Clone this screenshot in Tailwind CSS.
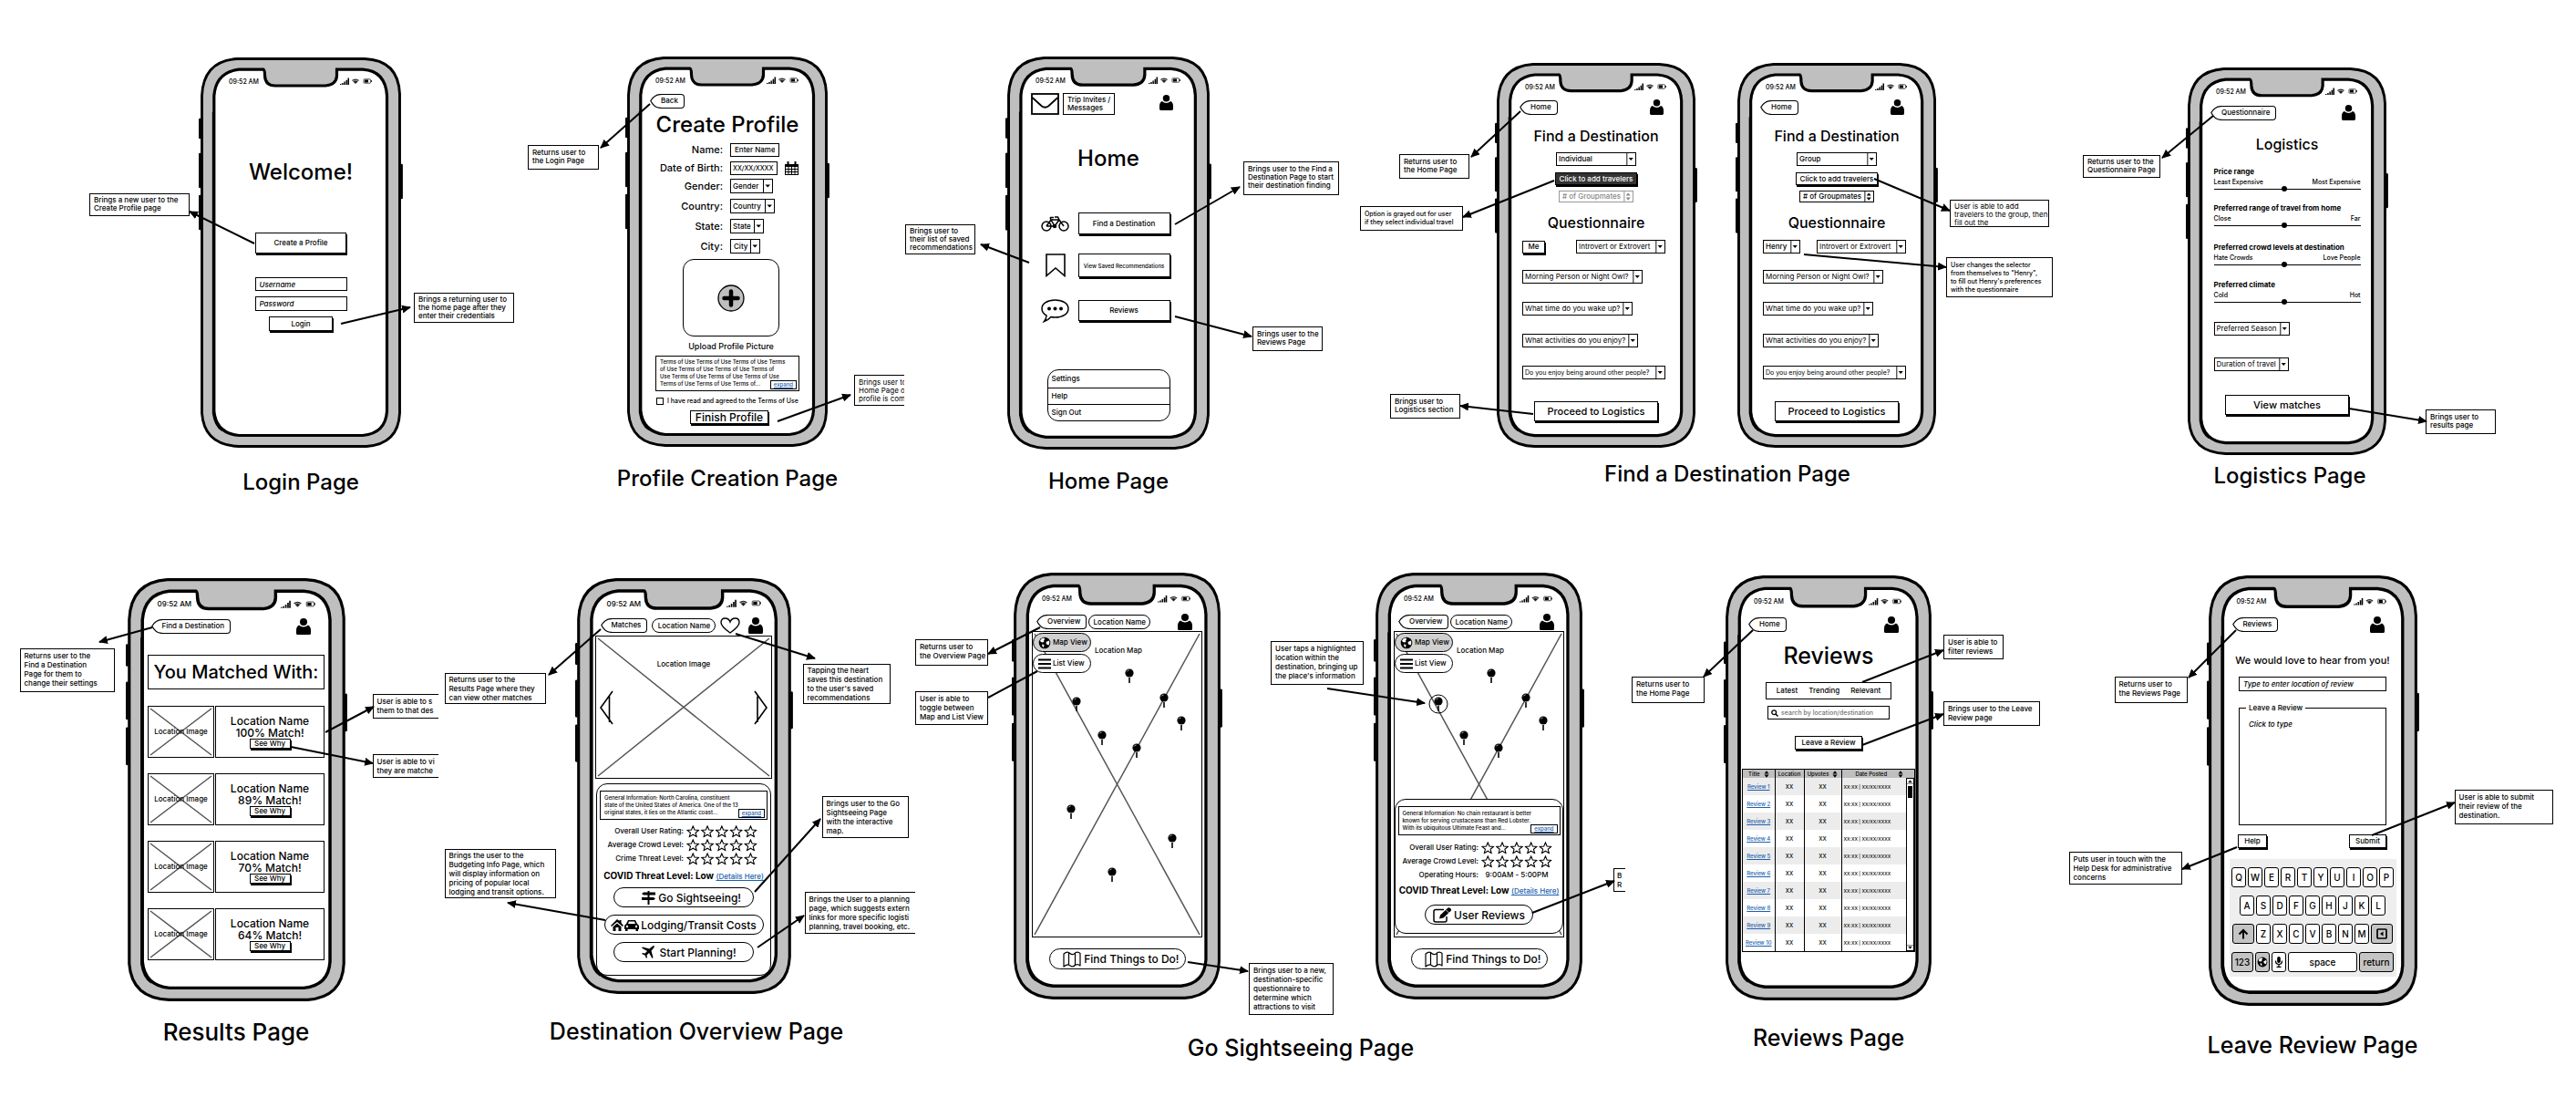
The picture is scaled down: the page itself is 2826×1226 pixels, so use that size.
<!DOCTYPE html>
<html lang="en">
<head>
<meta charset="utf-8">
<title>Travel app wireframes</title>
<script src="https://cdn.jsdelivr.net/npm/@tailwindcss/browser@4"></script>
</head>
<body class="overflow-x-hidden bg-white font-['Inter','Liberation_Sans',sans-serif] text-[8px]/[9px] font-medium text-black">

<!-- Shared drawings -->
<svg class="absolute size-0" aria-hidden="true">
  <defs>
    <marker id="tip" viewBox="0 0 10 9" refX="9" refY="4.5" markerWidth="10" markerHeight="9" markerUnits="userSpaceOnUse" orient="auto"><path d="M0 0 10 4.500 0 9Z"/></marker>
    <symbol id="frame" viewBox="-2 0 224 428" preserveAspectRatio="none">
      <path d="M-.7 68v20M-.7 106v36M-.7 152v36M220.600 118v36" stroke="#000" stroke-width="2.600" stroke-linecap="round"/>
      <path d="M40 1.500H180Q217 3 218.500 40V390Q217 424 182 426.500H42Q4 425 1.500 390V42Q3 4 40 1.500Z" fill="#bfbfbf" stroke="#000" stroke-width="2.900"/>
      <path d="M42 13.200H69Q70.500 14 70.500 20Q71 31 82 31H137Q149 30 149.500 20V13.200H178Q203 15 204.500 42V388Q203 412 178 414.500H42Q17 412 14.800 388V42Q17 16 42 13.200Z" fill="#fff" stroke="#000" stroke-width="3.200"/>
      <path d="M14 60V390Q16 404 24 409" fill="none" stroke="#000" stroke-width="2.400"/>
    </symbol>
    <symbol id="status" viewBox="0 0 35 9">
      <path d="M0 7h1.500v1H0zM2.200 6h1.500v2H2.200zM4.400 4.500h1.500V8H4.400zM6.600 2.700h1.500V8H6.600zM8.500.5H10V8H8.500z"/>
      <path d="M13 3Q17 0 21 3L17 7Z" fill="#222"/><path d="M14 4Q17 2 20 4" stroke="#fff" stroke-width=".6" fill="none"/>
      <rect x="26" y="1.800" width="7.600" height="4.400" rx=".8" fill="none" stroke="#000" stroke-width=".7"/><path d="M27 2.600h4v2.800h-4zM34 3h.8v2H34z"/>
    </symbol>
    <symbol id="person" viewBox="0 0 16 18"><circle cx="8" cy="4" r="4"/><path d="M3 7.500Q5.500 9.500 8 9.500T13 7.500Q16 9 16 13V16.500Q16 18 14.500 18H1.500Q0 18 0 16.500V13Q0 9 3 7.500Z"/></symbol>
    <symbol id="tagcap" viewBox="0 0 12 16"><path d="M12 .6H11C6 .8 3 4 .8 7.500C3 12 6 15.200 11 15.400H12" fill="#fff" stroke="#000" stroke-width="1.200"/></symbol>
    <symbol id="caret" viewBox="0 0 10 14"><path d="M.5 0V14" stroke="#000"/><path d="M2.500 5.500h5.500L5.200 8.600Z"/></symbol>
    <symbol id="spin" viewBox="0 0 10 12"><path d="M.5 0V12" stroke="currentColor"/><path d="M2.500 5h5.500L5.200 1.500ZM2.500 7h5.500L5.200 10.500Z" fill="currentColor"/></symbol>
    <symbol id="star" viewBox="0 0 16 15"><path d="M8 1 9.900 5.600 15 6 11.100 9.200 12.400 14 8 11.300 3.600 14 4.900 9.200 1 6 6.100 5.600Z" fill="none" stroke="#000" stroke-width="1.200"/></symbol>
    <symbol id="stars" viewBox="0 0 78 15"><use href="#star" x="0" y="1" width="14.500" height="13.500"/><use href="#star" x="15.800" y="1" width="14.500" height="13.500"/><use href="#star" x="31.600" y="1" width="14.500" height="13.500"/><use href="#star" x="47.400" y="1" width="14.500" height="13.500"/><use href="#star" x="63.200" y="1" width="14.500" height="13.500"/></symbol>
    <symbol id="pin" viewBox="-5 -5 10 17"><path d="M-.8 5h1.600v6h-1.600z"/><circle r="4.600"/><path d="M-3-1.500Q-2-3-.5-3" fill="none" stroke="#fff" stroke-width=".7"/></symbol>
    <symbol id="globe" viewBox="0 0 14 14"><circle cx="7" cy="7" r="6.300" fill="#000"/><path d="M6 1.500Q3 2 2 4.500L3 6 5 6.500 6.500 5.500 6 4 7.500 3ZM8.500 6 12 4.500Q13 7 11.500 9.500L9 8.500ZM4 8.500 6.500 9 6 12Q4 11 4 8.500Z" fill="#fff"/></symbol>
    <symbol id="foldmap" viewBox="0 0 20 18"><path d="M1 3Q4 .5 6.500 1.500Q9 4 11.500 3.500Q13 3 14 1.500Q17 .5 19 2.500V16Q17 14 14 15Q12 17 10 17Q8 16 6.500 15Q4 14.500 1 17ZM6.500 1.500V15M13.500 2V15.500" fill="#fff" stroke="#000" stroke-width="1.200" stroke-linejoin="round"/></symbol>
    <symbol id="sort" viewBox="0 0 6 8"><path d="M.5 3.400h5L3 .3ZM.5 4.600h5L3 7.700Z"/></symbol>
  </defs>
</svg>

<main>
  <div class="grid grid-cols-[660fr_276fr_560fr_774fr_478fr_78fr] items-start pt-[62px]">

    <!-- Login -->
    <section class="flex flex-col items-center pt-px">
      <div class="relative isolate flex h-[428px] w-[220px] flex-col items-center px-4 pt-[15px]">
        <svg class="absolute -left-[2px] top-0 -z-10 h-full w-[calc(100%+4px)]"><use href="#frame"/></svg>
        <div class="flex h-[22px] w-full items-center justify-between pl-[15px] pr-4 text-[7px]"><span>09:52 AM</span><svg class="h-[9px] w-[35px]"><use href="#status"/></svg></div>
        <h1 class="mt-[74px] text-[24px]/[30px]">Welcome!</h1>
        <button class="mt-[51px] h-[23px] w-[100px] border border-black bg-white shadow-[1px_2px_0_#000]">Create a Profile</button>
        <input aria-label="Username" placeholder="Username" class="mt-[26px] h-[15px] w-[101px] border border-black px-1 italic placeholder:text-black">
        <input aria-label="Password" placeholder="Password" type="password" class="mt-[6px] h-[16px] w-[101px] border border-black px-1 italic placeholder:text-black">
        <button class="mt-[6px] h-[16px] w-[70px] border border-black bg-white shadow-[1px_2px_0_#000]">Login</button>
        <p class="absolute -left-[122px] top-[149px] h-[25px] w-[110px] whitespace-nowrap border border-black bg-white px-1 pt-[2px]">Brings a new user to the<br>Create Profile page</p>
        <p class="absolute left-[234px] top-[258px] h-[33px] w-[110px] whitespace-nowrap border border-black bg-white px-1 pt-[2px]">Brings a returning user to<br>the home page after they<br>enter their credentials</p>
        <svg class="pointer-events-none absolute left-0 top-0 size-px overflow-visible stroke-black stroke-2"><path d="M59 204-12 169" marker-end="url(#tip)"/><path d="M154 292 230 274" marker-end="url(#tip)"/></svg>
      </div>
      <h2 class="mt-[23px] text-[24px]/[30px]">Login Page</h2>
    </section>

    <!-- Profile creation -->
    <section class="flex flex-col items-center">
      <div class="relative isolate flex h-[428px] w-[220px] flex-col items-center px-4 pt-[15px]">
        <svg class="absolute -left-[2px] top-0 -z-10 h-full w-[calc(100%+4px)]"><use href="#frame"/></svg>
        <div class="flex h-[22px] w-full items-center justify-between pl-[15px] pr-4 text-[7px]"><span>09:52 AM</span><svg class="h-[9px] w-[35px]"><use href="#status"/></svg></div>
        <button class="ml-[9px] mt-1 flex h-4 self-start"><svg class="h-4 w-3"><use href="#tagcap"/></svg><span class="flex h-4 items-center rounded-r-[4px] border border-l-0 border-black pb-px pr-[6px]">Back</span></button>
        <h1 class="mt-[3px] text-[24px]/[30px]">Create Profile</h1>
        <div class="mt-[2px] flex w-full flex-col text-[11px]/[14px]">
          <div class="flex h-5 items-center gap-2"><label for="name" class="w-[89px] text-right">Name:</label><input id="name" value="Enter Name" class="h-[15px] w-[54px] border border-black px-1 text-[8px]"></div>
          <div class="flex h-5 items-center gap-2"><label for="dob" class="w-[89px] whitespace-nowrap text-right">Date of Birth:</label><input id="dob" value="XX/XX/XXXX" class="h-[15px] w-[52px] border border-black px-[2px] text-[7px]">
            <svg class="h-[15px] w-[15px]" viewBox="0 0 15 15"><path d="M0 3h15v12H0z"/><path d="M3.500 0v4M11.500 0v4" stroke="#000" stroke-width="2"/><path d="M1 6h2.500v2H1zM4.500 6H7v2H4.500zM8 6h2.500v2H8zM11.500 6H14v2h-2.500zM1 9h2.500v2H1zM4.500 9H7v2H4.500zM8 9h2.500v2H8zM11.500 9H14v2h-2.500zM1 12h2.500v2H1zM4.500 12H7v2H4.500zM8 12h2.500v2H8zM11.500 12H14v2h-2.500z" fill="#fff"/></svg></div>
          <div class="flex h-5 items-center gap-2"><label for="gender" class="w-[89px] text-right">Gender:</label><span class="flex h-4 w-[47px] border border-black"><select id="gender" class="min-w-0 flex-1 appearance-none pl-[2px] text-[8px]"><option>Gender</option></select><svg class="h-[14px] w-[10px]"><use href="#caret"/></svg></span></div>
          <div class="mt-px flex h-[22px] items-center gap-2"><label for="country" class="w-[89px] text-right">Country:</label><span class="flex h-4 w-[49px] border border-black"><select id="country" class="min-w-0 flex-1 appearance-none pl-[2px] text-[8px]"><option>Country</option></select><svg class="h-[14px] w-[10px]"><use href="#caret"/></svg></span></div>
          <div class="flex h-[22px] items-center gap-2"><label for="state" class="w-[89px] text-right">State:</label><span class="flex h-4 w-[37px] border border-black"><select id="state" class="min-w-0 flex-1 appearance-none pl-[2px] text-[8px]"><option>State</option></select><svg class="h-[14px] w-[10px]"><use href="#caret"/></svg></span></div>
          <div class="flex h-[22px] items-center gap-2"><label for="city" class="w-[89px] text-right">City:</label><span class="flex h-4 w-[33px] border border-black"><select id="city" class="min-w-0 flex-1 appearance-none pl-[3px] text-[8px]"><option>City</option></select><svg class="h-[14px] w-[10px]"><use href="#caret"/></svg></span></div>
        </div>
        <button aria-label="Add picture" class="ml-2 mt-[3px] flex h-[85px] w-[106px] items-center justify-center rounded-[12px] border border-black">
          <svg class="size-[30px]" viewBox="0 0 30 30"><circle cx="15" cy="15" r="14" fill="#bfbfbf" stroke="#000" stroke-width="1.300"/><path d="M7.500 15h15M15 7.500v15" stroke="#000" stroke-width="4.500" stroke-linecap="round"/></svg>
        </button>
        <p class="ml-2 mt-[5px] text-[9px]/[11px]">Upload Profile Picture</p>
        <div class="mt-[5px] h-[39px] w-[158px] whitespace-nowrap border border-black pl-1 pt-[2px] text-[6px]/[8px]">Terms of Use Terms of Use Terms of Use Terms<br>of Use Terms of Use Terms of Use Terms of<br>Use Terms of Use Terms of Use Terms of Use<br><span class="flex justify-between pr-[2px]">Terms of Use Terms of Use Terms of... <a href="#" class="border border-black px-[3px] text-[#1c5fae] underline">expand</a></span></div>
        <label class="mt-[5px] flex items-center gap-1 whitespace-nowrap text-[7px]/[11px]"><input type="checkbox" class="size-2 appearance-none border border-black">I have read and agreed to the Terms of Use</label>
        <button class="ml-1 mt-[5px] h-[15px] w-[86px] border border-black bg-white text-[12px]/[13px] shadow-[1px_2px_0_#000]">Finish Profile</button>
        <p class="absolute -left-[109px] top-[97px] h-[27px] w-[78px] whitespace-nowrap border border-black bg-white px-1 pt-[3px]">Returns user to<br>the Login Page</p>
        <p class="absolute left-[249px] top-[349px] h-[34px] w-[55px] overflow-hidden whitespace-nowrap border border-r-0 border-black bg-white pl-1 pt-[3px] font-normal">Brings user to<br>Home Page o<br>profile is com</p>
        <svg class="pointer-events-none absolute left-0 top-0 size-px overflow-visible stroke-black stroke-2"><path d="M25 52-29 100" marker-end="url(#tip)"/><path d="M165 400 245 371" marker-end="url(#tip)"/></svg>
      </div>
      <h2 class="mt-5 whitespace-nowrap text-[24px]/[30px]">Profile Creation Page</h2>
    </section>

    <!-- Home -->
    <section class="flex flex-col items-center">
      <div class="relative isolate flex h-[431px] w-[222px] flex-col items-center px-4 pt-[15px]">
        <svg class="absolute -left-[2px] top-0 -z-10 h-full w-[calc(100%+4px)]"><use href="#frame"/></svg>
        <div class="flex h-[22px] w-full items-center justify-between pl-[15px] pr-4 text-[7px]"><span>09:52 AM</span><svg class="h-[9px] w-[35px]"><use href="#status"/></svg></div>
        <div class="mt-[3px] flex w-full items-start gap-1 pl-[10px] pr-6">
          <svg class="h-6 w-[31px]" viewBox="0 0 31 24"><rect x="1" y="1" width="29" height="22" fill="none" stroke="#000" stroke-width="1.800"/><path d="M1.500 5 12 14.500Q15.500 17 19 14.500L29.500 5" fill="none" stroke="#000" stroke-width="1.800"/></svg>
          <p class="h-6 w-[57px] whitespace-nowrap border border-black pl-1 pt-[2px]">Trip Invites /<br>Messages</p>
          <svg class="ml-auto mt-[2px] h-[17px] w-[15px]"><use href="#person"/></svg>
        </div>
        <h1 class="mt-[33px] text-[24px]/[30px]">Home</h1>
        <div class="mt-11 grid grid-cols-[31px_102px] items-center justify-items-center gap-x-[9px] self-start pl-[21px]">
          <svg class="h-[17px] w-[31px]" viewBox="0 0 31 17" fill="none" stroke="#000" stroke-width="1.500"><circle cx="6" cy="11" r="5"/><circle cx="25" cy="11" r="5"/><path d="M6 11 11 4H20L25 11M11 4 15 11H6M15 11 20 4 18.500 1H15M10 1.500h4M11 4 10 1.500"/><circle cx="15" cy="11" r="1.500" fill="#000"/></svg>
          <button class="h-6 w-[101px] border border-black bg-white shadow-[1px_2px_0_#000]">Find a Destination</button>
          <svg class="mt-5 h-[26px] w-[22px]" viewBox="0 0 22 26"><path d="M1 1H21V24.500L11 16 1 24.500Z" fill="none" stroke="#000" stroke-width="1.600"/></svg>
          <button class="mt-[21px] h-[26px] w-[101px] whitespace-nowrap border border-black bg-white text-[6px] shadow-[1px_2px_0_#000]">View Saved Recommendations</button>
          <svg class="mt-6 h-[26px] w-[31px]" viewBox="0 0 31 26"><path d="M15.500 1C24 1 30 5 30 10.500S24 20 15.500 20Q13 20 11 19.500 8 23 3.500 24.500 6 21.500 6 18 1 15 1 10.500C1 5 7 1 15.500 1Z" fill="none" stroke="#000" stroke-width="1.500"/><circle cx="9" cy="10.500" r="2"/><circle cx="15.500" cy="10.500" r="2"/><circle cx="22" cy="10.500" r="2"/></svg>
          <button class="mt-[22px] h-[23px] w-[101px] border border-black bg-white shadow-[1px_2px_0_#000]">Reviews</button>
        </div>
        <nav class="mt-[51px] flex h-[57px] w-[135px] flex-col divide-y divide-black rounded-[12px] border border-black">
          <a href="#" class="flex h-5 items-center pl-1">Settings</a><a href="#" class="flex h-[18px] items-center pl-1">Help</a><a href="#" class="flex h-[17px] items-center pl-1">Sign Out</a>
        </nav>
        <p class="absolute -left-[112px] top-[184px] h-[33px] w-[77px] whitespace-nowrap border border-black bg-white px-1 pt-[2px]">Brings user to<br>their list of saved<br>recommendations</p>
        <p class="absolute left-[259px] top-[115px] h-[37px] w-[105px] whitespace-nowrap border border-black bg-white px-1 pt-[3px]">Brings user to the Find a<br>Destination Page to start<br>their destination finding</p>
        <p class="absolute left-[269px] top-[296px] h-[27px] w-[77px] whitespace-nowrap border border-black bg-white px-1 pt-[3px]">Brings user to the<br>Reviews Page</p>
        <svg class="pointer-events-none absolute left-0 top-0 size-px overflow-visible stroke-black stroke-2"><path d="M24 226-29 206" marker-end="url(#tip)"/><path d="M184 184 255 143" marker-end="url(#tip)"/><path d="M184 285 268 307" marker-end="url(#tip)"/></svg>
      </div>
      <h2 class="mt-5 text-[24px]/[30px]">Home Page</h2>
    </section>

    <!-- Find a destination -->
    <section class="flex flex-col items-center pt-[7px]">
      <div class="flex gap-[46px]">
        <div class="relative isolate flex h-[422px] w-[218px] flex-col items-center px-4 pt-[15px]">
          <svg class="absolute -left-[2px] top-0 -z-10 h-full w-[calc(100%+4px)]"><use href="#frame"/></svg>
          <div class="flex h-[22px] w-full items-center justify-between pl-[15px] pr-4 text-[7px]"><span>09:52 AM</span><svg class="h-[9px] w-[35px]"><use href="#status"/></svg></div>
          <div class="mt-[3px] flex w-full items-center justify-between pl-[9px] pr-[19px]">
            <button class="flex h-4"><svg class="h-4 w-3"><use href="#tagcap"/></svg><span class="flex h-4 items-center rounded-r-[4px] border border-l-0 border-black pb-px pr-[6px]">Home</span></button>
            <svg class="h-[17px] w-[15px]"><use href="#person"/></svg>
          </div>
          <h1 class="mt-[13px] text-[16px]/[20px]">Find a Destination</h1>
          <span class="mt-2 flex h-[15px] w-[88px] border border-black"><select aria-label="Travel party" class="min-w-0 flex-1 appearance-none pl-[2px]"><option>Individual</option></select><svg class="h-[13px] w-[10px]"><use href="#caret"/></svg></span>
          <button class="mt-[7px] h-[14px] w-[90px] whitespace-nowrap border border-black bg-[#333] text-white shadow-[1px_2px_0_#000]" disabled>Click to add travelers</button>
          <span class="mt-[6px] flex h-[13px] w-[82px] items-center justify-between border border-[#999] pl-[3px] text-[#888]"><span class="whitespace-nowrap">&#35; of Groupmates</span><svg class="h-[11px] w-[10px]"><use href="#spin"/></svg></span>
          <h2 class="mt-3 text-[16px]/[20px]">Questionnaire</h2>
          <div class="mt-[9px] flex w-full items-center justify-between pl-3 pr-[17px]">
            <button class="h-[14px] w-[25px] border border-black bg-white shadow-[1px_2px_0_#000]">Me</button>
            <span class="flex h-[15px] w-[98px] border border-black"><select aria-label="Personality" class="min-w-0 flex-1 appearance-none pl-[2px] font-normal"><option>Introvert or Extrovert</option></select><svg class="h-[13px] w-[10px]"><use href="#caret"/></svg></span>
          </div>
          <div class="ml-3 mt-[18px] flex flex-col gap-[20px] self-start font-normal">
            <span class="flex h-[15px] w-[132px] border border-black"><select aria-label="Morning or night" class="min-w-0 flex-1 appearance-none pl-[2px]"><option>Morning Person or Night Owl?</option></select><svg class="h-[13px] w-[10px]"><use href="#caret"/></svg></span>
            <span class="flex h-[15px] w-[121px] border border-black"><select aria-label="Wake time" class="min-w-0 flex-1 appearance-none pl-[2px]"><option>What time do you wake up?</option></select><svg class="h-[13px] w-[10px]"><use href="#caret"/></svg></span>
            <span class="flex h-[15px] w-[127px] border border-black"><select aria-label="Activities" class="min-w-0 flex-1 appearance-none pl-[2px]"><option>What activities do you enjoy?</option></select><svg class="h-[13px] w-[10px]"><use href="#caret"/></svg></span>
            <span class="flex h-[15px] w-[157px] border border-black"><select aria-label="Company" class="min-w-0 flex-1 appearance-none pl-[2px] text-[7px]"><option>Do you enjoy being around other people?</option></select><svg class="h-[13px] w-[10px]"><use href="#caret"/></svg></span>
          </div>
          <button class="mt-6 h-[22px] w-[136px] whitespace-nowrap border border-black bg-white text-[11px] shadow-[1px_2px_0_#000]">Proceed to Logistics</button>
          <p class="absolute -left-[107px] top-[100px] h-[27px] w-[77px] whitespace-nowrap border border-black bg-white px-1 pt-[3px]">Returns user to<br>the Home Page</p>
          <p class="absolute -left-[150px] top-[157px] h-[27px] w-[113px] whitespace-nowrap border border-black bg-white px-1 pt-[3px] text-[7px]/[9px]">Option is grayed out for user<br>if they select individual travel</p>
          <p class="absolute -left-[117px] top-[363px] h-[27px] w-[77px] whitespace-nowrap border border-black bg-white px-1 pt-[3px]">Brings user to<br>Logistics section</p>
          <svg class="pointer-events-none absolute left-0 top-0 size-px overflow-visible stroke-black stroke-2"><path d="M26 53-28 103" marker-end="url(#tip)"/><path d="M63 129-37 169" marker-end="url(#tip)"/><path d="M40 385-40 376" marker-end="url(#tip)"/></svg>
        </div>
        <div class="relative isolate flex h-[422px] w-[218px] flex-col items-center px-4 pt-[15px]">
          <svg class="absolute -left-[2px] top-0 -z-10 h-full w-[calc(100%+4px)]"><use href="#frame"/></svg>
          <div class="flex h-[22px] w-full items-center justify-between pl-[15px] pr-4 text-[7px]"><span>09:52 AM</span><svg class="h-[9px] w-[35px]"><use href="#status"/></svg></div>
          <div class="mt-[3px] flex w-full items-center justify-between pl-[9px] pr-[19px]">
            <button class="flex h-4"><svg class="h-4 w-3"><use href="#tagcap"/></svg><span class="flex h-4 items-center rounded-r-[4px] border border-l-0 border-black pb-px pr-[6px]">Home</span></button>
            <svg class="h-[17px] w-[15px]"><use href="#person"/></svg>
          </div>
          <h1 class="mt-[13px] text-[16px]/[20px]">Find a Destination</h1>
          <span class="mt-2 flex h-[15px] w-[88px] border border-black"><select aria-label="Travel party" class="min-w-0 flex-1 appearance-none pl-[2px]"><option>Group</option></select><svg class="h-[13px] w-[10px]"><use href="#caret"/></svg></span>
          <button class="mt-[7px] h-[14px] w-[90px] whitespace-nowrap border border-black bg-white shadow-[1px_2px_0_#000]">Click to add travelers</button>
          <span class="mt-[6px] flex h-[13px] w-[82px] items-center justify-between border border-black pl-[3px]"><span class="whitespace-nowrap">&#35; of Groupmates</span><svg class="h-[11px] w-[10px]"><use href="#spin"/></svg></span>
          <h2 class="mt-3 text-[16px]/[20px]">Questionnaire</h2>
          <div class="mt-[9px] flex w-full items-center justify-between pl-3 pr-[17px]">
            <span class="flex h-[15px] w-[41px] border border-black"><select aria-label="Traveler" class="min-w-0 flex-1 appearance-none pl-[2px]"><option>Henry</option></select><svg class="h-[13px] w-[10px]"><use href="#caret"/></svg></span>
            <span class="flex h-[15px] w-[98px] border border-black"><select aria-label="Personality" class="min-w-0 flex-1 appearance-none pl-[2px] font-normal"><option>Introvert or Extrovert</option></select><svg class="h-[13px] w-[10px]"><use href="#caret"/></svg></span>
          </div>
          <div class="ml-3 mt-[18px] flex flex-col gap-[20px] self-start font-normal">
            <span class="flex h-[15px] w-[132px] border border-black"><select aria-label="Morning or night" class="min-w-0 flex-1 appearance-none pl-[2px]"><option>Morning Person or Night Owl?</option></select><svg class="h-[13px] w-[10px]"><use href="#caret"/></svg></span>
            <span class="flex h-[15px] w-[121px] border border-black"><select aria-label="Wake time" class="min-w-0 flex-1 appearance-none pl-[2px]"><option>What time do you wake up?</option></select><svg class="h-[13px] w-[10px]"><use href="#caret"/></svg></span>
            <span class="flex h-[15px] w-[127px] border border-black"><select aria-label="Activities" class="min-w-0 flex-1 appearance-none pl-[2px]"><option>What activities do you enjoy?</option></select><svg class="h-[13px] w-[10px]"><use href="#caret"/></svg></span>
            <span class="flex h-[15px] w-[157px] border border-black"><select aria-label="Company" class="min-w-0 flex-1 appearance-none pl-[2px] text-[7px]"><option>Do you enjoy being around other people?</option></select><svg class="h-[13px] w-[10px]"><use href="#caret"/></svg></span>
          </div>
          <button class="mt-6 h-[22px] w-[136px] whitespace-nowrap border border-black bg-white text-[11px] shadow-[1px_2px_0_#000]">Proceed to Logistics</button>
          <p class="absolute left-[233px] top-[150px] h-[30px] w-[109px] whitespace-nowrap border border-black bg-white px-1 pt-[2px] font-normal">User is able to add<br>travelers to the group, then<br>fill out the</p>
          <p class="absolute left-[229px] top-[213px] h-11 w-[117px] whitespace-nowrap border border-black bg-white px-1 pt-[3px] text-[7px]/[9px]">User changes the selector<br>from themselves to "Henry",<br>to fill out Henry's preferences<br>with the questionnaire</p>
          <svg class="pointer-events-none absolute left-0 top-0 size-px overflow-visible stroke-black stroke-2"><path d="M150 127 233 162" marker-end="url(#tip)"/><path d="M73 210 229 224" marker-end="url(#tip)"/></svg>
        </div>
      </div>
      <h2 class="mt-[14px] pl-6 text-[24px]/[30px]">Find a Destination Page</h2>
    </section>

    <!-- Logistics -->
    <section class="flex flex-col items-center pt-3">
      <div class="relative isolate flex h-[425px] w-[218px] flex-col items-center px-4 pt-[15px]">
        <svg class="absolute -left-[2px] top-0 -z-10 h-full w-[calc(100%+4px)]"><use href="#frame"/></svg>
        <div class="flex h-[22px] w-full items-center justify-between pl-[15px] pr-4 text-[7px]"><span>09:52 AM</span><svg class="h-[9px] w-[35px]"><use href="#status"/></svg></div>
        <div class="mt-1 flex w-full items-center justify-between pl-[9px] pr-[18px]">
          <button class="flex h-4"><svg class="h-4 w-3"><use href="#tagcap"/></svg><span class="flex h-4 items-center rounded-r-[4px] border border-l-0 border-black pb-px pr-[6px]">Questionnaire</span></button>
          <svg class="h-[17px] w-[15px]"><use href="#person"/></svg>
        </div>
        <h1 class="mt-4 text-[16px]/[20px]">Logistics</h1>
        <div class="mt-4 w-[161px]">
          <label for="price" class="block font-bold">Price range</label>
          <div class="mt-[2px] flex justify-between text-[7px]"><span>Least Expensive</span><span>Most Expensive</span></div>
          <input id="price" type="range" value="48" class="block h-[6px] w-full appearance-none bg-[linear-gradient(#000,#000)] bg-[length:100%_1px] bg-center bg-no-repeat [&::-webkit-slider-thumb]:size-[6px] [&::-webkit-slider-thumb]:appearance-none [&::-webkit-slider-thumb]:rounded-full [&::-webkit-slider-thumb]:bg-black">
          <label for="range" class="mt-[14px] block font-bold">Preferred range of travel from home</label>
          <div class="mt-[2px] flex justify-between text-[7px]"><span>Close</span><span>Far</span></div>
          <input id="range" type="range" value="48" class="block h-[6px] w-full appearance-none bg-[linear-gradient(#000,#000)] bg-[length:100%_1px] bg-center bg-no-repeat [&::-webkit-slider-thumb]:size-[6px] [&::-webkit-slider-thumb]:appearance-none [&::-webkit-slider-thumb]:rounded-full [&::-webkit-slider-thumb]:bg-black">
          <label for="crowd" class="mt-[17px] block font-bold">Preferred crowd levels at destination</label>
          <div class="mt-[2px] flex justify-between text-[7px]"><span>Hate Crowds</span><span>Love People</span></div>
          <input id="crowd" type="range" value="48" class="block h-[6px] w-full appearance-none bg-[linear-gradient(#000,#000)] bg-[length:100%_1px] bg-center bg-no-repeat [&::-webkit-slider-thumb]:size-[6px] [&::-webkit-slider-thumb]:appearance-none [&::-webkit-slider-thumb]:rounded-full [&::-webkit-slider-thumb]:bg-black">
          <label for="climate" class="mt-[15px] block font-bold">Preferred climate</label>
          <div class="mt-[2px] flex justify-between text-[7px]"><span>Cold</span><span>Hot</span></div>
          <input id="climate" type="range" value="48" class="block h-[6px] w-full appearance-none bg-[linear-gradient(#000,#000)] bg-[length:100%_1px] bg-center bg-no-repeat [&::-webkit-slider-thumb]:size-[6px] [&::-webkit-slider-thumb]:appearance-none [&::-webkit-slider-thumb]:rounded-full [&::-webkit-slider-thumb]:bg-black">
          <span class="mt-[19px] flex h-[15px] w-[83px] border border-black"><select aria-label="Season" class="min-w-0 flex-1 appearance-none pl-[2px] font-normal"><option>Preferred Season</option></select><svg class="h-[13px] w-[10px]"><use href="#caret"/></svg></span>
          <span class="mt-6 flex h-[15px] w-[82px] border border-black"><select aria-label="Duration" class="min-w-0 flex-1 appearance-none pl-[2px] font-normal"><option>Duration of travel</option></select><svg class="h-[13px] w-[10px]"><use href="#caret"/></svg></span>
        </div>
        <button class="mt-[26px] h-[22px] w-[136px] border border-black bg-white text-[11px] shadow-[1px_2px_0_#000]">View matches</button>
        <p class="absolute -left-[115px] top-[96px] h-[25px] w-[85px] whitespace-nowrap border border-black bg-white px-1 pt-[2px]">Returns user to the<br>Questionnaire Page</p>
        <p class="absolute left-[261px] top-[375px] h-[27px] w-[77px] whitespace-nowrap border border-black bg-white px-1 pt-[3px]">Brings user to<br>results page</p>
        <svg class="pointer-events-none absolute left-0 top-0 size-px overflow-visible stroke-black stroke-2"><path d="M28 53-28 99" marker-end="url(#tip)"/><path d="M177 374 262 388" marker-end="url(#tip)"/></svg>
      </div>
      <h2 class="mt-2 pl-[6px] text-[24px]/[30px]">Logistics Page</h2>
    </section>
  </div>

  <div class="mt-[84px] grid grid-cols-[102fr_314fr_668fr_680fr_484fr_578fr] items-start">

    <!-- Results -->
    <section class="col-start-2 flex flex-col items-center pt-[6px]">
      <div class="relative isolate flex h-[464px] w-[239px] flex-col items-center px-[17px] pt-[17px]">
        <svg class="absolute -left-[2px] top-0 -z-10 h-full w-[calc(100%+4px)]"><use href="#frame"/></svg>
        <div class="flex h-[23px] w-full items-center justify-between px-4 text-[8px]"><span>09:52 AM</span><svg class="h-[10px] w-[38px]"><use href="#status"/></svg></div>
        <div class="mt-1 flex w-full items-center justify-between pl-[9px] pr-[21px]">
          <button class="flex h-4"><svg class="h-4 w-3"><use href="#tagcap"/></svg><span class="flex h-4 items-center rounded-r-[4px] border border-l-0 border-black pb-px pr-[6px]">Find a Destination</span></button>
          <svg class="h-[18px] w-4"><use href="#person"/></svg>
        </div>
        <h1 class="mt-[22px] flex h-[38px] w-[194px] items-center justify-center whitespace-nowrap border border-black text-[20px]">You Matched With:</h1>
        <ul class="mt-[18px] flex w-[194px] flex-col gap-[17px]">
          <li class="flex h-[57px] gap-px"><figure class="relative isolate flex w-[73px] items-center justify-center border border-black"><svg class="absolute inset-0 -z-10 size-full" viewBox="0 0 71 55" preserveAspectRatio="none"><path d="M2 2 69 53M69 2 2 53" stroke="#555" stroke-width="1.500"/></svg>Location Image</figure><div class="flex flex-1 flex-col items-center border border-black pt-[9px] text-[12px]/[13px]"><span>Location Name</span><span>100% Match!</span><button class="h-[11px] w-[45px] border border-black bg-white text-[8px]/[9px] shadow-[1px_2px_0_#000]">See Why</button></div></li>
          <li class="flex h-[57px] gap-px"><figure class="relative isolate flex w-[73px] items-center justify-center border border-black"><svg class="absolute inset-0 -z-10 size-full" viewBox="0 0 71 55" preserveAspectRatio="none"><path d="M2 2 69 53M69 2 2 53" stroke="#555" stroke-width="1.500"/></svg>Location Image</figure><div class="flex flex-1 flex-col items-center border border-black pt-[9px] text-[12px]/[13px]"><span>Location Name</span><span>89% Match!</span><button class="h-[11px] w-[45px] border border-black bg-white text-[8px]/[9px] shadow-[1px_2px_0_#000]">See Why</button></div></li>
          <li class="flex h-[57px] gap-px"><figure class="relative isolate flex w-[73px] items-center justify-center border border-black"><svg class="absolute inset-0 -z-10 size-full" viewBox="0 0 71 55" preserveAspectRatio="none"><path d="M2 2 69 53M69 2 2 53" stroke="#555" stroke-width="1.500"/></svg>Location Image</figure><div class="flex flex-1 flex-col items-center border border-black pt-[9px] text-[12px]/[13px]"><span>Location Name</span><span>70% Match!</span><button class="h-[11px] w-[45px] border border-black bg-white text-[8px]/[9px] shadow-[1px_2px_0_#000]">See Why</button></div></li>
          <li class="flex h-[57px] gap-px"><figure class="relative isolate flex w-[73px] items-center justify-center border border-black"><svg class="absolute inset-0 -z-10 size-full" viewBox="0 0 71 55" preserveAspectRatio="none"><path d="M2 2 69 53M69 2 2 53" stroke="#555" stroke-width="1.500"/></svg>Location Image</figure><div class="flex flex-1 flex-col items-center border border-black pt-[9px] text-[12px]/[13px]"><span>Location Name</span><span>64% Match!</span><button class="h-[11px] w-[45px] border border-black bg-white text-[8px]/[9px] shadow-[1px_2px_0_#000]">See Why</button></div></li>
        </ul>
        <p class="absolute -left-[118px] top-[77px] h-12 w-[104px] whitespace-nowrap border border-black bg-white px-1 pt-[2px] leading-[10px]">Returns user to the<br>Find a Destination<br>Page for them to<br>change their settings</p>
        <p class="absolute left-[269px] top-[127px] h-[27px] w-[72px] overflow-hidden whitespace-nowrap border border-r-0 border-black bg-white pl-1 pt-[2px] leading-[10px]">User is able to s<br>them to that des</p>
        <p class="absolute left-[269px] top-[193px] h-[26px] w-[72px] overflow-hidden whitespace-nowrap border border-r-0 border-black bg-white pl-1 pt-[2px] leading-[10px]">User is able to vi<br>they are matche</p>
        <svg class="pointer-events-none absolute left-0 top-0 size-px overflow-visible stroke-black stroke-2"><path d="M27 54-31 70" marker-end="url(#tip)"/><path d="M217 169 270 141" marker-end="url(#tip)"/><path d="M179 185 269 203" marker-end="url(#tip)"/></svg>
      </div>
      <h2 class="mt-[19px] whitespace-nowrap text-[26px]/[30px]">Results Page</h2>
    </section>

    <!-- Destination overview -->
    <section class="flex flex-col items-center pt-[6px]">
      <div class="relative isolate flex h-[456px] w-[235px] flex-col items-center px-[17px] pt-[17px]">
        <svg class="absolute -left-[2px] top-0 -z-10 h-full w-[calc(100%+4px)]"><use href="#frame"/></svg>
        <div class="flex h-[22px] w-full items-center justify-between px-4 text-[8px]"><span>09:52 AM</span><svg class="h-[10px] w-[38px]"><use href="#status"/></svg></div>
        <div class="mt-1 flex w-full items-center pl-[9px] pr-[14px]">
          <button class="flex h-4"><svg class="h-4 w-3"><use href="#tagcap"/></svg><span class="flex h-4 items-center rounded-r-[4px] border border-l-0 border-black pb-px pr-[6px]">Matches</span></button>
          <button class="ml-[5px] h-4 w-[70px] whitespace-nowrap rounded-full border border-black">Location Name</button>
          <svg class="ml-[5px] h-[18px] w-[22px]" viewBox="0 0 22 18"><path d="M11 17Q1 10 1 5.500Q1 1 5.500 1 9.500 1 11 5Q12.500 1 16.500 1 21 1 21 5.500 21 10 11 17Z" fill="none" stroke="#000" stroke-width="1.400"/></svg>
          <svg class="ml-auto h-[18px] w-4"><use href="#person"/></svg>
        </div>
        <figure class="relative isolate mt-[2px] flex h-[157px] w-[194px] items-center justify-between border border-black px-1">
          <svg class="absolute inset-0 -z-10 size-full" viewBox="0 0 192 155"><path d="M2 2 190 153M190 2 2 153" stroke="#555" stroke-width="1.500"/></svg>
          <button aria-label="Previous"><svg class="h-[38px] w-[15px]" viewBox="0 0 15 38"><path d="M14 1 1 19 14 37M10.500 6.500V35" fill="none" stroke="#000" stroke-width="1.600"/></svg></button>
          <figcaption class="self-start pt-[26px]">Location Image</figcaption>
          <button aria-label="Next"><svg class="h-[38px] w-[15px]" viewBox="0 0 15 38"><path d="M1 1 14 19 1 37M4 6.500V35" fill="none" stroke="#000" stroke-width="1.600"/></svg></button>
        </figure>
        <div class="mt-[5px] flex h-[211px] w-[192px] flex-col items-center rounded-[12px] border border-black pt-[7px]">
          <div class="h-8 w-[184px] whitespace-nowrap border border-black pl-1 pt-[3px] text-[6px]/[8px]">General Information: North Carolina, constituent<br>state of the United States of America. One of the 13<br><span class="flex justify-between pr-[2px]">original states, it lies on the Atlantic coast... <a href="#" class="border border-black px-[3px] text-[#1c5fae] underline">expand</a></span></div>
          <dl class="mt-[5px] grid grid-cols-[95px_78px] items-center gap-x-[3px] self-start whitespace-nowrap text-right leading-[15px]"><dt>Overall User Rating:</dt><dd><svg class="h-[15px] w-[78px]"><use href="#stars"/></svg></dd><dt>Average Crowd Level:</dt><dd><svg class="h-[15px] w-[78px]"><use href="#stars"/></svg></dd><dt>Crime Threat Level:</dt><dd><svg class="h-[15px] w-[78px]"><use href="#stars"/></svg></dd></dl>
          <p class="mt-[5px] whitespace-nowrap text-[10px]/[12px] font-bold">COVID Threat Level: Low <a href="#" class="text-[8px] font-medium text-[#1c5fae] underline">(Details Here)</a></p>
          <button class="mt-[6px] flex h-[22px] w-[154px] items-center justify-end gap-[3px] rounded-full border border-black pr-[13px] text-[12px]"><svg class="size-[15px]" viewBox="0 0 15 15"><path d="M6.500 0h2v15h-2z"/><path d="M2 1.500h13v3H2L0 3ZM0 7h13l2 1.500-2 1.500H0z"/></svg>Go Sightseeing!</button>
          <button class="mt-2 flex h-[22px] w-[175px] items-center justify-center gap-[2px] whitespace-nowrap rounded-full border border-black text-[12px]"><svg class="h-[13px] w-[31px]" viewBox="0 0 31 13"><path d="M7 0 9.500 2V1h2v3L14 7l-1 1L7 3 1 8 0 7ZM7 4.500l4.500 3.800V13H8.500V9h-3v4h-3V8.300ZM19 1h8l2 4 2 2v4h-1v2h-2.500v-2h-9v2H16v-2h-1V7l2-2ZM20 2.500 19 5h8l-1-2.500Z"/><circle cx="18" cy="8" r="1.200" fill="#fff"/><circle cx="28" cy="8" r="1.200" fill="#fff"/></svg>Lodging/Transit Costs</button>
          <button class="mt-2 flex h-[22px] w-[154px] items-center justify-center gap-[5px] rounded-full border border-black pl-3 text-[12px]"><svg class="size-[14px]" viewBox="0 0 14 14"><path d="M14 0Q12 0 10 2L8.500 3.500 1 1.500 0 2.500 6 6 3.500 8.500 1 8 0 9 3.500 10.500 5 14 6 13 5.500 10.500 8 8 11.500 14 12.500 13 10.500 5.500 12 4Q14 2 14 0Z"/></svg>Start Planning!</button>
        </div>
        <p class="absolute -left-[145px] top-[104px] h-[34px] w-[111px] whitespace-nowrap border border-black bg-white px-1 pt-px leading-[10px]">Returns user to the<br>Results Page where they<br>can view other matches</p>
        <p class="absolute left-[248px] top-[94px] h-11 w-[96px] whitespace-nowrap border border-black bg-white px-1 pt-px leading-[10px]">Tapping the heart<br>saves this destination<br>to the user's saved<br>recommendations</p>
        <p class="absolute left-[269px] top-[239px] h-[46px] w-[95px] whitespace-nowrap border border-black bg-white px-1 pt-[2px] leading-[10px]">Brings user to the Go<br>Sightseeing Page<br>with the interactive<br>map.</p>
        <p class="absolute -left-[145px] top-[297px] h-[54px] w-[122px] whitespace-nowrap border border-black bg-white px-1 pt-px leading-[10px]">Brings the user to the<br>Budgeting Info Page, which<br>will display information on<br>pricing of popular local<br>lodging and transit options.</p>
        <p class="absolute left-[250px] top-[344px] h-[46px] w-[121px] overflow-hidden whitespace-nowrap border border-r-0 border-black bg-white pl-1 pt-[2px] leading-[10px]">Brings the User to a planning<br>page, which suggests extern<br>links for more specific logisti<br>planning, travel booking, etc.</p>
        <svg class="pointer-events-none absolute left-0 top-0 size-px overflow-visible stroke-black stroke-2"><path d="M26 56-31 106" marker-end="url(#tip)"/><path d="M174 61 261 88" marker-end="url(#tip)"/><path d="M195 344 267 264" marker-end="url(#tip)"/><path d="M31 375-76 356" marker-end="url(#tip)"/><path d="M198 405 249 370" marker-end="url(#tip)"/></svg>
      </div>
      <h2 class="mt-[26px] pl-7 text-[25px]/[30px]">Destination Overview Page</h2>
    </section>

    <!-- Go sightseeing -->
    <section class="flex flex-col items-center">
      <div class="flex gap-[170px]">
        <div class="relative isolate flex h-[468px] w-[227px] flex-col items-center px-4 pt-[17px]">
          <svg class="absolute -left-[2px] top-0 -z-10 h-full w-[calc(100%+4px)]"><use href="#frame"/></svg>
          <div class="flex h-[23px] w-full items-center justify-between pl-[15px] pr-[17px] text-[7px]"><span>09:52 AM</span><svg class="h-[10px] w-[36px]"><use href="#status"/></svg></div>
          <div class="mt-[5px] flex w-full items-center pl-[9px] pr-[15px]">
            <button class="flex h-4"><svg class="h-4 w-3"><use href="#tagcap"/></svg><span class="flex h-4 items-center rounded-r-[4px] border border-l-0 border-black pb-px pr-[6px]">Overview</span></button>
            <button class="ml-[2px] h-4 w-[68px] whitespace-nowrap rounded-full border border-black">Location Name</button>
            <svg class="ml-auto h-[18px] w-4"><use href="#person"/></svg>
          </div>
          <figure class="relative isolate mt-px flex h-[336px] w-[187px] flex-col items-start border border-black">
            <svg class="absolute inset-0 -z-10 size-full" viewBox="0 0 185 334"><path d="M2 2 183 332M183 2 2 332" stroke="#555" stroke-width="1.500"/>
              <use href="#pin" x="101" y="40" width="10" height="17"/><use href="#pin" x="43" y="71" width="10" height="17"/><use href="#pin" x="139" y="67" width="10" height="17"/><use href="#pin" x="158" y="92" width="10" height="17"/><use href="#pin" x="71" y="108" width="10" height="17"/><use href="#pin" x="109" y="122" width="10" height="17"/><use href="#pin" x="37" y="189" width="10" height="17"/><use href="#pin" x="148" y="221" width="10" height="17"/><use href="#pin" x="82" y="258" width="10" height="17"/></svg>
            <div class="flex items-center gap-1">
              <div class="flex flex-col gap-[2px] pt-px">
                <button class="flex h-[21px] w-[64px] items-center gap-[2px] whitespace-nowrap rounded-full border border-black bg-[#d0d0d0] pl-[5px]"><svg class="size-[14px]"><use href="#globe"/></svg>Map View</button>
                <button class="flex h-[21px] w-[64px] items-center gap-[2px] whitespace-nowrap rounded-full border border-black bg-white pl-[5px]"><svg class="size-[14px]" viewBox="0 0 14 14"><path d="M0 2.500h14M0 7h14M0 11.500h14" stroke="#000" stroke-width="2"/></svg>List View</button>
              </div>
              <figcaption class="pb-1">Location Map</figcaption>
            </div>
          </figure>
          <button class="mt-3 flex h-[23px] w-[150px] items-center justify-end gap-[3px] whitespace-nowrap rounded-full border border-black pr-[6px] text-[12px]"><svg class="h-[18px] w-5"><use href="#foldmap"/></svg>Find Things to Do!</button>
          <p class="absolute -left-[108px] top-[73px] h-[29px] w-[80px] whitespace-nowrap border border-black bg-white px-1 pt-[2px] leading-[10px]">Returns user to<br>the Overview Page</p>
          <p class="absolute -left-[108px] top-[130px] h-[37px] w-[80px] whitespace-nowrap border border-black bg-white px-1 pt-[2px] leading-[10px]">User is able to<br>toggle between<br>Map and List View</p>
          <p class="absolute left-[258px] top-[428px] h-[57px] w-[93px] whitespace-nowrap border border-black bg-white px-1 pt-[2px] leading-[10px]">Brings user to a new,<br>destination-specific<br>questionnaire to<br>determine which<br>attractions to visit</p>
          <svg class="pointer-events-none absolute left-0 top-0 size-px overflow-visible stroke-black stroke-2"><path d="M29 60-28 89" marker-end="url(#tip)"/><path d="M26 108-28 137"/><path d="M191 427 257 437" marker-end="url(#tip)"/></svg>
        </div>
        <div class="relative isolate flex h-[468px] w-[227px] flex-col items-center px-4 pt-[17px]">
          <svg class="absolute -left-[2px] top-0 -z-10 h-full w-[calc(100%+4px)]"><use href="#frame"/></svg>
          <div class="flex h-[23px] w-full items-center justify-between pl-[15px] pr-[17px] text-[7px]"><span>09:52 AM</span><svg class="h-[10px] w-[36px]"><use href="#status"/></svg></div>
          <div class="mt-[5px] flex w-full items-center pl-[9px] pr-[15px]">
            <button class="flex h-4"><svg class="h-4 w-3"><use href="#tagcap"/></svg><span class="flex h-4 items-center rounded-r-[4px] border border-l-0 border-black pb-px pr-[6px]">Overview</span></button>
            <button class="ml-[2px] h-4 w-[68px] whitespace-nowrap rounded-full border border-black">Location Name</button>
            <svg class="ml-auto h-[18px] w-4"><use href="#person"/></svg>
          </div>
          <figure class="relative isolate mt-px flex h-[336px] w-[187px] flex-col items-start border border-black">
            <svg class="absolute inset-0 -z-10 size-full" viewBox="0 0 185 334"><path d="M2 2 183 332M183 2 2 332" stroke="#555" stroke-width="1.500"/>
              <use href="#pin" x="101" y="40" width="10" height="17"/><use href="#pin" x="43" y="71" width="10" height="17"/><use href="#pin" x="139" y="67" width="10" height="17"/><use href="#pin" x="158" y="92" width="10" height="17"/><use href="#pin" x="71" y="108" width="10" height="17"/><use href="#pin" x="109" y="122" width="10" height="17"/><circle cx="48" cy="79" r="10" fill="none" stroke="#000"/></svg>
            <div class="flex items-center gap-1">
              <div class="flex flex-col gap-[2px] pt-px">
                <button class="flex h-[21px] w-[64px] items-center gap-[2px] whitespace-nowrap rounded-full border border-black bg-[#d0d0d0] pl-[5px]"><svg class="size-[14px]"><use href="#globe"/></svg>Map View</button>
                <button class="flex h-[21px] w-[64px] items-center gap-[2px] whitespace-nowrap rounded-full border border-black bg-white pl-[5px]"><svg class="size-[14px]" viewBox="0 0 14 14"><path d="M0 2.500h14M0 7h14M0 11.500h14" stroke="#000" stroke-width="2"/></svg>List View</button>
              </div>
              <figcaption class="pb-1">Location Map</figcaption>
            </div>
            <div class="mb-[3px] mt-auto flex h-[148px] w-[185px] flex-col items-center rounded-[12px] border border-black bg-white pt-[7px]">
              <div class="h-8 w-[178px] whitespace-nowrap border border-black pl-1 pt-[3px] text-[6px]/[8px]">General Information: No chain restaurant is better<br>known for serving crustaceans than Red Lobster.<br><span class="flex justify-between pr-[2px]">With its ubiquitous Ultimate Feast and... <a href="#" class="border border-black px-[3px] text-[#1c5fae] underline">expand</a></span></div>
              <dl class="mt-[6px] grid grid-cols-[91px_78px] items-center gap-x-[3px] self-start whitespace-nowrap text-right leading-[15px]"><dt>Overall User Rating:</dt><dd><svg class="h-[15px] w-[78px]"><use href="#stars"/></svg></dd><dt>Average Crowd Level:</dt><dd><svg class="h-[15px] w-[78px]"><use href="#stars"/></svg></dd><dt>Operating Hours:</dt><dd class="text-center">9:00AM - 5:00PM</dd></dl>
              <p class="mt-[3px] whitespace-nowrap text-[10px]/[12px] font-bold">COVID Threat Level: Low <a href="#" class="text-[8px] font-medium text-[#1c5fae] underline">(Details Here)</a></p>
              <button class="mt-[9px] flex h-[22px] w-[119px] items-center justify-center gap-[3px] rounded-full border border-black text-[12px]"><svg class="h-[17px] w-5" viewBox="0 0 20 17"><path d="M12 2.500H3Q1 2.500 1 4.500V14Q1 16 3 16H13Q15 16 15 14V10" fill="none" stroke="#000" stroke-width="1.500"/><path d="M7 12.500 8 8.500 16 1Q17-.5 19 1T19.500 4L11.500 11.500Z"/><path d="M14.500 3 17.500 6" stroke="#fff" stroke-width=".8"/></svg>User Reviews</button>
            </div>
          </figure>
          <button class="mt-3 flex h-[23px] w-[150px] items-center justify-end gap-[3px] whitespace-nowrap rounded-full border border-black pr-[6px] text-[12px]"><svg class="h-[18px] w-5"><use href="#foldmap"/></svg>Find Things to Do!</button>
          <p class="absolute -left-[115px] top-[75px] h-12 w-[102px] whitespace-nowrap border border-black bg-white px-1 pt-[2px] leading-[10px]">User taps a highlighted<br>location within the<br>destination, bringing up<br>the place's information</p>
          <p class="absolute left-[261px] top-[324px] h-[26px] w-[13px] whitespace-nowrap border border-r-0 border-black bg-white pl-[3px] pt-[2px] leading-[10px]">B<br>R</p>
          <svg class="pointer-events-none absolute left-0 top-0 size-px overflow-visible stroke-black stroke-2"><path d="M-53 127 54 143" marker-end="url(#tip)"/><path d="M172 373 262 338" marker-end="url(#tip)"/></svg>
        </div>
      </div>
      <h2 class="mt-[38px] pl-[6px] text-[25px]/[30px]">Go Sightseeing Page</h2>
    </section>

    <!-- Reviews -->
    <section class="flex flex-col items-center pt-[3px]">
      <div class="relative isolate flex h-[466px] w-[226px] flex-col items-center px-4 pt-[17px]">
        <svg class="absolute -left-[2px] top-0 -z-10 h-full w-[calc(100%+4px)]"><use href="#frame"/></svg>
        <div class="flex h-[23px] w-full items-center justify-between pl-[15px] pr-[17px] text-[7px]"><span>09:52 AM</span><svg class="h-[10px] w-[36px]"><use href="#status"/></svg></div>
        <div class="mt-[5px] flex w-full items-center justify-between pl-[9px] pr-[20px]">
          <button class="flex h-4"><svg class="h-4 w-3"><use href="#tagcap"/></svg><span class="flex h-4 items-center rounded-r-[4px] border border-l-0 border-black pb-px pr-[6px]">Home</span></button>
          <svg class="h-[18px] w-4"><use href="#person"/></svg>
        </div>
        <h1 class="mt-[10px] text-[25px]/[30px]">Reviews</h1>
        <nav class="mt-[14px] flex h-[19px] w-[138px] items-center justify-center gap-3 border border-black"><a href="#">Latest</a><a href="#">Trending</a><a href="#">Relevant</a></nav>
        <label class="mt-[7px] flex h-[15px] w-[134px] items-center gap-[3px] border border-black pl-[3px]"><svg class="size-2 shrink-0" viewBox="0 0 8 8"><circle cx="3.200" cy="3.200" r="2.400" fill="none" stroke="#000" stroke-width="1.300"/><path d="M5 5 7.500 7.500" stroke="#000" stroke-width="1.500"/></svg><input aria-label="Search" placeholder="search by location/destination" class="min-w-0 flex-1 text-[7px] placeholder:text-[#777]"></label>
        <button class="mt-[18px] h-[15px] w-[74px] border border-black bg-white shadow-[1px_2px_0_#000]">Leave a Review</button>
        <div class="mt-[21px] flex w-[190px] border border-black">
          <table class="w-[179px] table-fixed border-collapse text-center text-[6px]/[8px]">
            <colgroup><col class="w-[35px]"><col class="w-[32px]"><col class="w-[41px]"><col class="w-[71px]"></colgroup>
            <thead class="bg-[#bfbfbf]"><tr class="h-[9px] [&>th]:border-r [&>th]:border-black [&>th]:p-0 [&>th]:font-medium [&>th:last-child]:border-r-0"><th><span class="flex items-center justify-center gap-1">Title <svg class="h-2 w-[6px]"><use href="#sort"/></svg></span></th><th>Location</th><th><span class="flex items-center justify-center gap-1">Upvotes <svg class="h-2 w-[6px]"><use href="#sort"/></svg></span></th><th><span class="flex items-center justify-center gap-3 pl-3">Date Posted <svg class="h-2 w-[6px]"><use href="#sort"/></svg></span></th></tr></thead>
            <tbody class="[&_a]:text-[#1c5fae] [&_a]:underline [&_td]:border-r [&_td]:border-black [&_td]:p-0 [&_td:last-child]:border-r-0 [&_td:last-child]:pl-[2px] [&_td:last-child]:text-left [&_td:last-child]:text-[5px] [&_tr]:h-[19px] [&_tr:nth-child(odd)]:bg-[#ececec]">
              <tr><td><a href="#">Review 1</a></td><td>XX</td><td>XX</td><td>XX:XX | XX/XX/XXXX</td></tr>
              <tr><td><a href="#">Review 2</a></td><td>XX</td><td>XX</td><td>XX:XX | XX/XX/XXXX</td></tr>
              <tr><td><a href="#">Review 3</a></td><td>XX</td><td>XX</td><td>XX:XX | XX/XX/XXXX</td></tr>
              <tr><td><a href="#">Review 4</a></td><td>XX</td><td>XX</td><td>XX:XX | XX/XX/XXXX</td></tr>
              <tr><td><a href="#">Review 5</a></td><td>XX</td><td>XX</td><td>XX:XX | XX/XX/XXXX</td></tr>
              <tr><td><a href="#">Review 6</a></td><td>XX</td><td>XX</td><td>XX:XX | XX/XX/XXXX</td></tr>
              <tr><td><a href="#">Review 7</a></td><td>XX</td><td>XX</td><td>XX:XX | XX/XX/XXXX</td></tr>
              <tr><td><a href="#">Review 8</a></td><td>XX</td><td>XX</td><td>XX:XX | XX/XX/XXXX</td></tr>
              <tr><td><a href="#">Review 9</a></td><td>XX</td><td>XX</td><td>XX:XX | XX/XX/XXXX</td></tr>
              <tr><td><a href="#">Review 10</a></td><td>XX</td><td>XX</td><td>XX:XX | XX/XX/XXXX</td></tr>
            </tbody>
          </table>
          <div class="flex w-[10px] flex-col bg-[#bfbfbf] pt-[9px]"><div class="flex flex-1 flex-col items-center justify-between border border-black bg-white"><svg class="h-[6px] w-full" viewBox="0 0 8 6"><path d="M2 4h4L4 1.500ZM0 5.600h8" stroke="#000" stroke-width=".6"/></svg><span class="mb-auto mt-[2px] h-[13px] w-[5px] bg-black"></span><svg class="h-[6px] w-full" viewBox="0 0 8 6"><path d="M2 2h4L4 4.500ZM0 .4h8" stroke="#000" stroke-width=".6"/></svg></div></div>
        </div>
        <p class="absolute -left-[103px] top-[111px] h-[29px] w-[80px] whitespace-nowrap border border-black bg-white px-1 pt-[2px] leading-[10px]">Returns user to<br>the Home Page</p>
        <p class="absolute left-[239px] top-[65px] h-[27px] w-[66px] whitespace-nowrap border border-black bg-white px-1 pt-[2px] leading-[10px]">User is able to<br>filter reviews</p>
        <p class="absolute left-[239px] top-[138px] h-[27px] w-[106px] whitespace-nowrap border border-black bg-white px-1 pt-[2px] leading-[10px]">Brings user to the Leave<br>Review page</p>
        <svg class="pointer-events-none absolute left-0 top-0 size-px overflow-visible stroke-black stroke-2"><path d="M30 60-24 111" marker-end="url(#tip)"/><path d="M150 117 239 82" marker-end="url(#tip)"/><path d="M150 186 239 152" marker-end="url(#tip)"/></svg>
      </div>
      <h2 class="mt-[26px] text-[25px]/[30px]">Reviews Page</h2>
    </section>

    <!-- Leave review -->
    <section class="flex flex-col items-center pt-[3px]">
      <div class="relative isolate flex h-[472px] w-[229px] flex-col items-center px-4 pt-[17px]">
        <svg class="absolute -left-[2px] top-0 -z-10 h-full w-[calc(100%+4px)]"><use href="#frame"/></svg>
        <div class="flex h-[23px] w-full items-center justify-between pl-[15px] pr-[18px] text-[7px]"><span>09:52 AM</span><svg class="h-[10px] w-[36px]"><use href="#status"/></svg></div>
        <div class="mt-[5px] flex w-full items-center justify-between pl-[10px] pr-[20px]">
          <button class="flex h-4"><svg class="h-4 w-3"><use href="#tagcap"/></svg><span class="flex h-4 items-center rounded-r-[4px] border border-l-0 border-black pb-px pr-[6px]">Reviews</span></button>
          <svg class="h-[18px] w-4"><use href="#person"/></svg>
        </div>
        <h1 class="mt-[22px] whitespace-nowrap text-[11px]/[16px]">We would love to hear from you!</h1>
        <input aria-label="Location" placeholder="Type to enter location of review" class="mt-[10px] h-4 w-[162px] border border-black px-1 italic placeholder:text-black">
        <fieldset class="mt-[14px] h-[133px] w-[162px] border border-black pl-[10px] pt-[9px]"><legend class="-ml-[3px] px-[3px]">Leave a Review</legend><textarea aria-label="Leave a Review" placeholder="Click to type" class="block h-[110px] w-full resize-none italic placeholder:text-black"></textarea></fieldset>
        <div class="mt-[10px] flex w-[164px] justify-between pr-px"><button class="h-[15px] w-8 border border-black bg-white shadow-[1px_2px_0_#000]">Help</button><button class="h-[15px] w-[41px] border border-black bg-white shadow-[1px_2px_0_#000]">Submit</button></div>
        <div class="mt-3 flex h-[129px] w-[183px] flex-col items-center gap-[9px] bg-[#eee] pt-[9px] text-[10px] [&_button]:flex [&_button]:h-[22px] [&_button]:items-center [&_button]:justify-center [&_button]:rounded-[3px] [&_button]:border [&_button]:border-black [&>div]:flex [&>div]:gap-[2px]">
          <div class="[&>button]:w-4 [&>button]:bg-white"><button>Q</button><button>W</button><button>E</button><button>R</button><button>T</button><button>Y</button><button>U</button><button>I</button><button>O</button><button>P</button></div>
          <div class="[&>button]:w-4 [&>button]:bg-white"><button>A</button><button>S</button><button>D</button><button>F</button><button>G</button><button>H</button><button>J</button><button>K</button><button>L</button></div>
          <div><button aria-label="Shift" class="w-6 bg-[#c4c4c4]"><svg class="size-3" viewBox="0 0 12 12"><path d="M6 11.500V2M1.500 6.500 6 2l4.500 4.500" fill="none" stroke="#000" stroke-width="2"/></svg></button><button class="w-4 bg-white">Z</button><button class="w-4 bg-white">X</button><button class="w-4 bg-white">C</button><button class="w-4 bg-white">V</button><button class="w-4 bg-white">B</button><button class="w-4 bg-white">N</button><button class="w-4 bg-white">M</button><button aria-label="Backspace" class="w-6 bg-[#c4c4c4]"><svg class="size-3" viewBox="0 0 12 12"><rect x="1" y="1" width="10" height="10" rx="1" fill="none" stroke="#000" stroke-width="1.700"/><path d="M7.500 3.500v5L4 6Z"/></svg></button></div>
          <div><button class="w-6 bg-[#c4c4c4]">123</button><button aria-label="Language" class="w-4 bg-[#c4c4c4]"><svg class="size-3 shrink-0"><use href="#globe" width="12" height="12"/></svg></button><button aria-label="Dictate" class="w-4 bg-white"><svg class="h-3 w-[10px]" viewBox="0 0 10 12"><rect x="3.200" y="0" width="3.600" height="7" rx="1.800"/><path d="M1.500 4.500Q1.500 8.500 5 8.500T8.500 4.500M5 8.500V11M2.500 11.300h5" fill="none" stroke="#000" stroke-width="1.200"/></svg></button><button class="w-[76px] bg-white">space</button><button class="w-[38px] bg-[#c4c4c4]">return</button></div>
        </div>
        <p class="absolute -left-[103px] top-[111px] h-[29px] w-[80px] whitespace-nowrap border border-black bg-white px-1 pt-[2px] leading-[10px]">Returns user to<br>the Reviews Page</p>
        <p class="absolute -left-[153px] top-[303px] h-[36px] w-[124px] whitespace-nowrap border border-black bg-white px-1 pt-[2px] leading-[10px]">Puts user in touch with the<br>Help Desk for administrative<br>concerns</p>
        <p class="absolute left-[270px] top-[235px] h-[38px] w-[108px] whitespace-nowrap border border-black bg-white px-1 pt-[2px] leading-[10px]">User is able to submit<br>their review of the<br>destination.</p>
        <svg class="pointer-events-none absolute left-0 top-0 size-px overflow-visible stroke-black stroke-2"><path d="M30 60-22 112" marker-end="url(#tip)"/><path d="M31 298-29 322" marker-end="url(#tip)"/><path d="M179 285 270 249" marker-end="url(#tip)"/></svg>
      </div>
      <h2 class="mt-7 text-[25px]/[30px]">Leave Review Page</h2>
    </section>
  </div>
</main>
</body>
</html>
